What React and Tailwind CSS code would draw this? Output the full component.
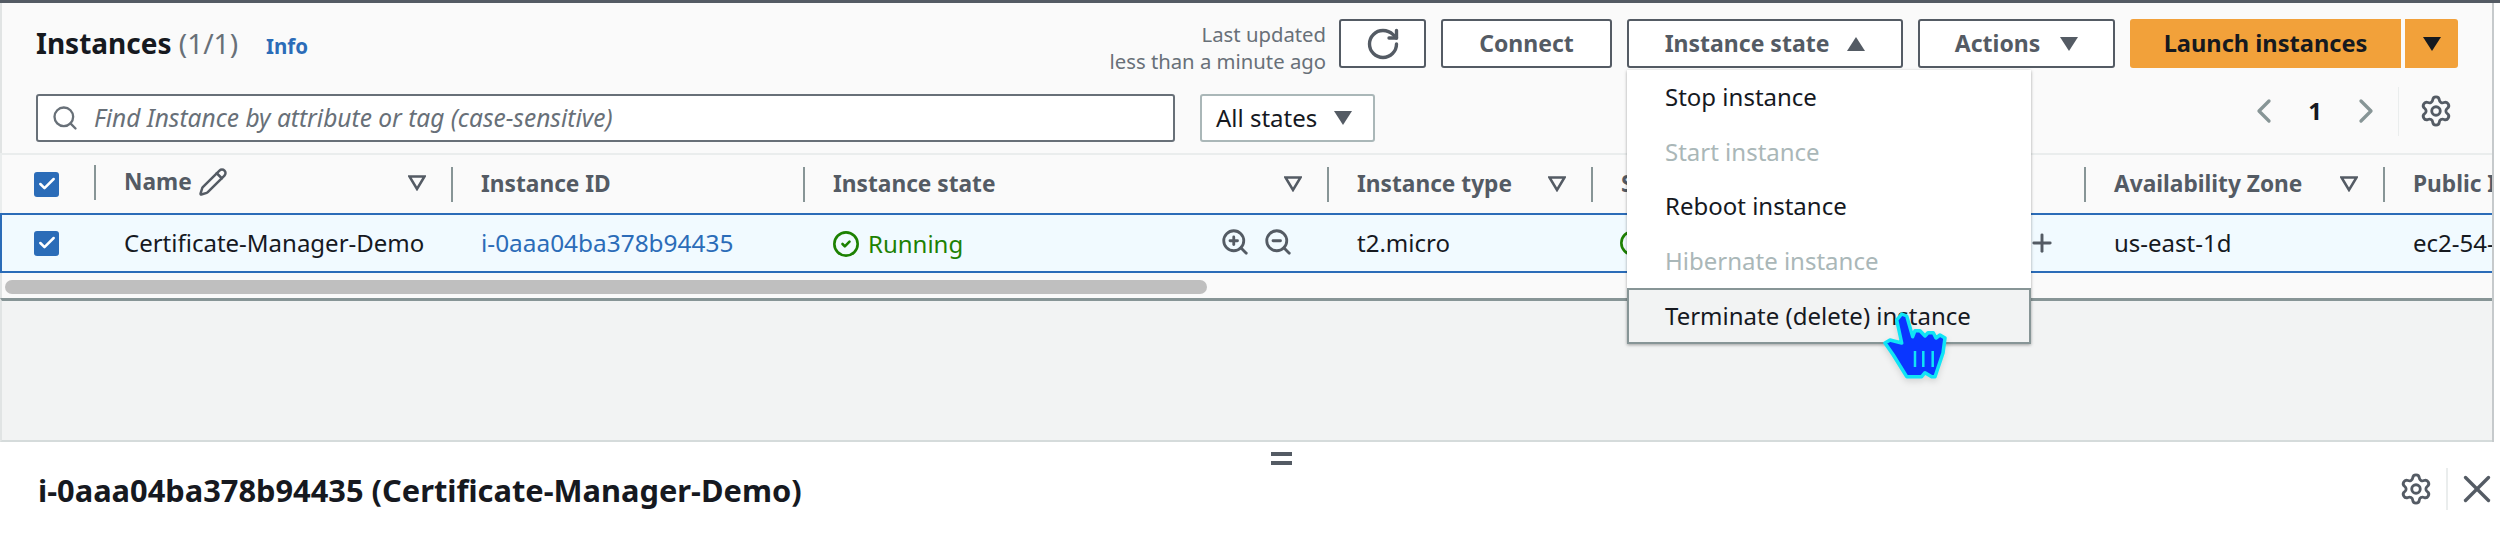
import { Check, ChevronLeft, ChevronRight, CircleCheck, Pencil, Plus, RotateCw, Search, Settings, X, ZoomIn, ZoomOut } from "lucide-react";

const menuItems = [
  { label: "Stop instance" },
  { label: "Start instance", disabled: true },
  { label: "Reboot instance" },
  { label: "Hibernate instance", disabled: true },
];

const gridCols = "grid grid-cols-[92px_357px_352px_524px_264px_493px_299px_1fr]";

function Box() {
  return (
    <div className="w-[25px] h-[25px] rounded-[3px] bg-[#2b6cb8] flex items-center justify-center">
      <Check size={20} strokeWidth={3} className="text-white" />
    </div>
  );
}

function Caret({ up, className }) {
  return (
    <svg width="18" height="14" viewBox="0 0 18 14" className={className}>
      <path d={up ? "M9 0 L18 14 L0 14 Z" : "M0 0 L18 0 L9 14 Z"} fill="currentColor" />
    </svg>
  );
}

function FilterIcon({ className }) {
  return (
    <svg width="18" height="16" viewBox="0 0 18 16" className={className}>
      <path d="M1.5 1.5 L16.5 1.5 L9 14 Z" fill="none" stroke="#545b64" strokeWidth="2.5" />
    </svg>
  );
}

function HeadCell({ children, filter, className = "" }) {
  return (
    <div className={`h-[35px] border-l-2 border-[#879596] pl-[28px] flex items-center justify-between pr-[25px] text-[22.7px] font-bold text-[#545b64] whitespace-nowrap overflow-hidden ${className}`}>
      <div className="flex items-center gap-[6px]">{children}</div>
      {filter && <FilterIcon />}
    </div>
  );
}

function Button({ children, className = "" }) {
  return (
    <button className={`h-[49px] bg-white border-2 border-[#545b64] rounded-[3px] text-[23px] font-bold text-[#545b64] flex items-center justify-center ${className}`}>
      {children}
    </button>
  );
}

function HandCursor() {
  return (
    <svg width="72" height="76" viewBox="0 0 72 76" className="absolute z-20 left-[1880px] top-[310px] drop-shadow-md">
      <path
        d="M21.7 4 L16.7 10 L21.7 33 L10 30 L5 33 L13.3 45 L26.7 66.7 L41.7 66.7 L45 62.7 L51.7 66.7 L55 66.7 L63 43 L65 28 L60 25 L56 28 L53.3 22.7 L48 22.7 L45 26 L40 20.7 L35 20.7 L32.7 26.7 L26.7 6 Z"
        fill="#0a36ff"
        stroke="#10e4f5"
        strokeWidth="3.5"
        strokeLinejoin="round"
      />
      <path d="M35 41 V57 M43.3 41 V57 M52.7 41 V57" stroke="#10e4f5" strokeWidth="2.5" fill="none" />
    </svg>
  );
}

export default function App() {
  return (
    <div className="relative w-[2500px] h-[533px] overflow-hidden bg-white text-[24px] text-[#16191f] font-['Noto_Sans',sans-serif]">
      <div className="h-[3px] bg-[#545b64]" />

      <div className="w-[2494px] border-r-2 border-[#c6cacc]">
        {/* Header */}
        <div className="h-[150px] bg-[#fafafa] border-l-2 border-[#e1e4e4] pl-[34px] pr-[34px] pt-[16px]">
          <div className="flex items-start justify-between h-[49px]">
            <div className="flex items-baseline gap-[28px] mt-[6px]">
              <h1 className="text-[28px] font-bold leading-[36px]">
                Instances <span className="font-normal text-[#687078]">(1/1)</span>
              </h1>
              <span className="text-[20.5px] font-bold text-[#2b6cb8]">Info</span>
            </div>
            <div className="flex items-start gap-[15px]">
              <div className="mt-[2px] -mr-[2px] text-right text-[20.3px] leading-[27px] text-[#687078]">
                <div>Last updated</div>
                <div>less than a minute ago</div>
              </div>
              <Button className="w-[87px]">
                <RotateCw size={36} strokeWidth={2.25} />
              </Button>
              <Button className="w-[171px]">Connect</Button>
              <div className="relative">
                <Button className="w-[276px] gap-[18px]">
                  Instance state <Caret up />
                </Button>
                <div className="absolute left-0 top-[51px] w-[404px] bg-white shadow-[0_1px_3px_rgba(0,0,0,0.35)] z-10 font-normal">
                  {menuItems.map((item) => (
                    <div key={item.label} className={`h-[54.5px] pl-[38px] flex items-center ${item.disabled ? "text-[#aab7b8]" : "text-[#16191f]"}`}>
                      {item.label}
                    </div>
                  ))}
                  <div className="h-[56px] pl-[36px] flex items-center bg-[#f2f3f3] border-2 border-[#879596]">
                    Terminate (delete) instance
                  </div>
                </div>
              </div>
              <Button className="w-[197px] gap-[20px]">
                Actions <Caret />
              </Button>
              <div className="flex gap-[4px]">
                <div className="w-[271px] h-[49px] bg-[#f2a13a] rounded-l-[3px] flex items-center justify-center text-[23.6px] font-bold">
                  Launch instances
                </div>
                <div className="w-[53px] h-[49px] bg-[#f2a13a] rounded-r-[3px] flex items-center justify-center">
                  <Caret />
                </div>
              </div>
            </div>
          </div>

          <div className="flex items-center mt-[26px]">
            <div className="w-[1139px] h-[48px] bg-white border-2 border-[#687078] rounded-[3px] flex items-center pl-[13px] gap-[15px]">
              <Search size={28} className="text-[#687078]" />
              <span className="italic text-[24.5px] text-[#687078]">Find Instance by attribute or tag (case-sensitive)</span>
            </div>
            <div className="ml-[25px] w-[175px] h-[48px] bg-white border-2 border-[#aab7b8] rounded-[3px] flex items-center pl-[14px] gap-[17px]">
              All states <Caret className="text-[#545b64]" />
            </div>
            <div className="ml-auto -mt-[14px] flex items-center text-[#879596]">
              <ChevronLeft size={40} strokeWidth={2} />
              <span className="mx-[24px] font-bold text-[#16191f]">1</span>
              <ChevronRight size={40} strokeWidth={2} />
              <div className="ml-[12px] w-px h-[49px] bg-[#eaeded]" />
              <Settings size={34} strokeWidth={2} className="ml-[20px] mr-[5px] text-[#545b64]" />
            </div>
          </div>
        </div>

        {/* Table */}
        <div className={`${gridCols} h-[60px] items-center bg-[#fafafa] border-t-2 border-l-2 border-[#eaeded]`}>
          <div className="pl-[32px]"><Box /></div>
          <HeadCell filter className="-mt-[3px]">
            Name <Pencil size={30} strokeWidth={2} />
          </HeadCell>
          <HeadCell>Instance ID</HeadCell>
          <HeadCell filter>Instance state</HeadCell>
          <HeadCell filter>Instance type</HeadCell>
          <HeadCell>S</HeadCell>
          <HeadCell filter>Availability Zone</HeadCell>
          <HeadCell>Public IPv4 DNS</HeadCell>
        </div>
        <div className={`${gridCols} h-[60px] items-center bg-[#f1faff] border-y-2 border-l-2 border-[#2b6cb8] overflow-hidden whitespace-nowrap`}>
          <div className="pl-[32px]"><Box /></div>
          <div className="pl-[30px]">Certificate-Manager-Demo</div>
          <div className="pl-[30px] text-[24.4px] text-[#2b6cb8]">i-0aaa04ba378b94435</div>
          <div className="pl-[29px] pr-[34px] flex items-center justify-between">
            <div className="flex items-center gap-[8px] text-[#1d8102] mt-[2px]">
              <CircleCheck size={28} strokeWidth={2.25} />
              Running
            </div>
            <div className="flex items-center gap-[13px] text-[#545b64] -mt-[2px]">
              <ZoomIn size={30} strokeWidth={2.25} />
              <ZoomOut size={30} strokeWidth={2.25} />
            </div>
          </div>
          <div className="pl-[30px]">t2.micro</div>
          <div className="pl-[28px] pr-[28px] flex items-center justify-between">
            <CircleCheck size={28} strokeWidth={2.25} className="text-[#1d8102]" />
            <Plus size={28} strokeWidth={2.5} className="text-[#545b64]" />
          </div>
          <div className="pl-[30px]">us-east-1d</div>
          <div className="pl-[30px]">ec2-54-</div>
        </div>
        <div className="h-[25px] bg-[#fafafa] border-l-2 border-[#e1e4e4] pl-[3px] pt-[7px]">
          <div className="w-[1202px] h-[14px] rounded-full bg-[#bfbfbf]" />
        </div>

        {/* Empty split area */}
        <div className="h-[144px] bg-[#f2f3f3] border-t-[3px] border-b-[2px] border-t-[#879596] border-b-[#d5dbdb] border-l-2 border-l-[#e1e4e4]" />
      </div>

      {/* Details panel */}
      <div className="relative h-[91px] flex items-start justify-between pl-[38px]">
        <div className="absolute left-[1271px] top-[10px] w-[21px] h-[13px] border-y-4 border-[#545b64]" />
        <h2 className="mt-[30px] text-[30.8px] leading-[36px] font-bold">i-0aaa04ba378b94435 (Certificate-Manager-Demo)</h2>
        <div className="flex items-center text-[#545b64] mt-[26px] h-[42px]">
          <Settings size={34} strokeWidth={2} />
          <div className="ml-[13px] w-[2px] h-[42px] bg-[#eaeded]" />
          <X size={46} strokeWidth={1.75} className="ml-[6px]" />
        </div>
      </div>

      <HandCursor />
    </div>
  );
}
